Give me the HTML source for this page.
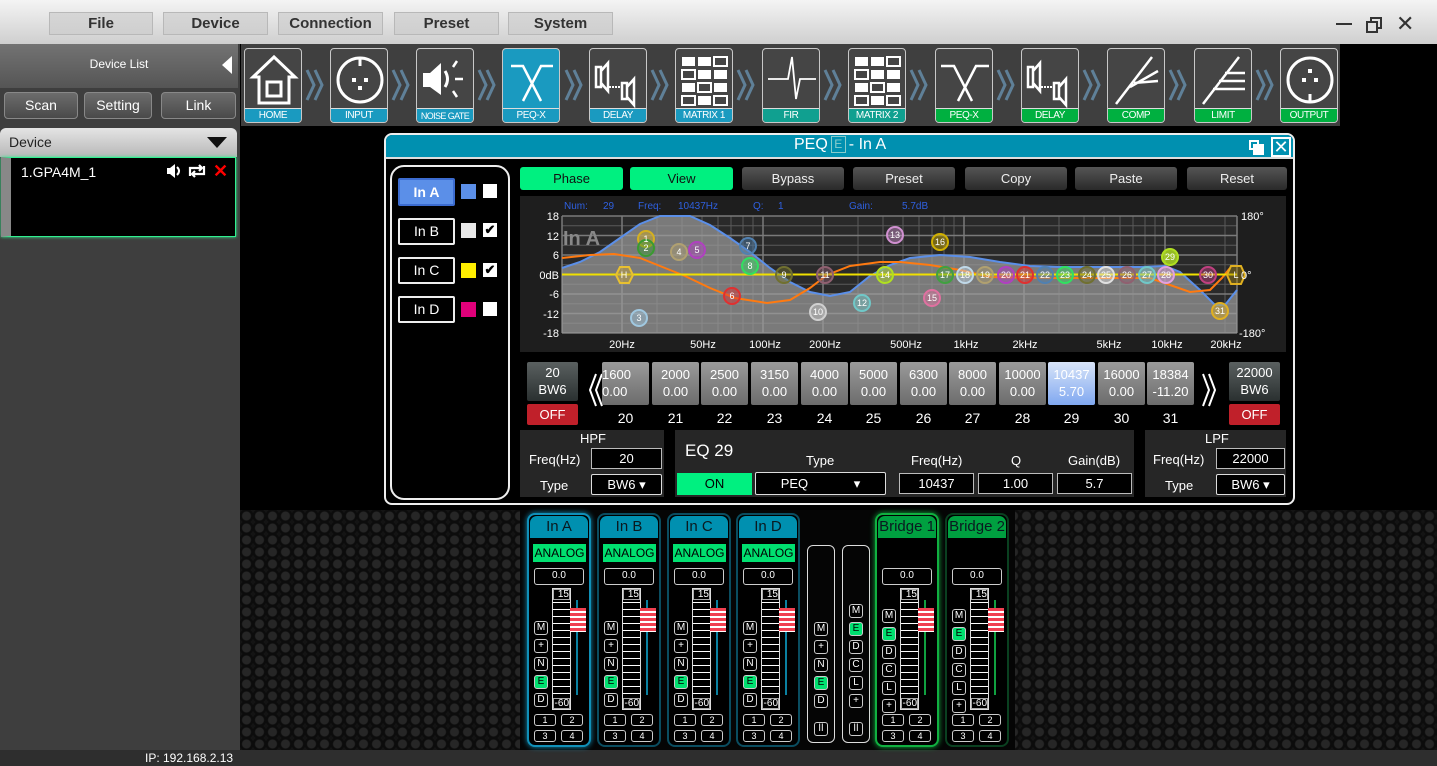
<!DOCTYPE html>
<html><head><meta charset="utf-8">
<style>
*{box-sizing:border-box;margin:0;padding:0}
body{width:1437px;height:766px;overflow:hidden;background:#000;font-family:"Liberation Sans Narrow","Liberation Sans",sans-serif;position:relative;color:#fff}
.a{position:absolute}
.menu{top:12px;height:23px;border:1px solid #b8b8b8;background:linear-gradient(#d6d6d6,#cfcfcf);color:#333;font-weight:bold;font-size:15px;text-align:center;line-height:21px}
.lbtn{top:92px;height:27px;border:1px solid #888;border-radius:4px;background:linear-gradient(#6c6c6c,#4a4a4a);font-size:14px;text-align:center;line-height:25px}
.tile{top:48px;width:58px;height:75px;border:1px solid #c8c8c8;border-radius:4px;background:#454545;overflow:hidden}
.tile svg{position:absolute;left:0;top:0}
.tile .lb{position:absolute;left:0;right:0;bottom:0;height:14px;font-size:10px;line-height:14px;text-align:center;color:#fff;border-top:1px solid #ddd;letter-spacing:-0.4px;white-space:nowrap}
.chev{top:68px}
.tb{top:167px;height:23px;border-radius:3px;font-size:13px;text-align:center;line-height:23px}
.g{background:#00f080;color:#111}
.d{background:linear-gradient(#555,#2a2a2a);color:#eee}
.band{top:362px;width:47px;height:43px;background:linear-gradient(#9a9a9a,#6c6c6c);border-radius:2px;font-size:13px;line-height:17px;text-align:center;padding-top:4px;color:#fff}
.bn{top:410px;width:47px;text-align:center;font-size:14px}
.inp{height:21px;border:1px solid #bbb;background:#000;font-size:13px;text-align:center;line-height:19px}
.pl{font-size:13px}
.strip{top:513px;width:64px;height:234px;border-radius:8px;background:#000;border:2px solid #0a4d60}
.hdr{position:absolute;left:1px;right:1px;top:1px;height:22px;border-radius:7px 7px 0 0;background:#0090b0;color:#0a1a20;font-size:15px;text-align:center;line-height:22px}
.an{position:absolute;left:4px;top:29px;width:53px;height:18px;background:#00e070;color:#000;font-size:12px;text-align:center;line-height:18px}
.val{position:absolute;left:5px;top:53px;width:50px;height:17px;border:1px solid #ccc;border-radius:3px;font-size:10px;text-align:center;line-height:14px}
.sc{position:absolute;left:23px;top:73px;width:19px;height:122px;border:1px solid #ddd;background:repeating-linear-gradient(#000 0 6px,#fff 6px 7px)}
.sc i{position:absolute;left:0;right:0;background:#000;font-style:normal;font-size:10px;text-align:right;line-height:10px;height:11px;border:1px solid #aaa}
.trk{position:absolute;left:47px;top:85px;width:2px;height:95px;background:#0a80a0}
.knob{position:absolute;left:41px;top:93px;width:16px;height:24px;background:repeating-linear-gradient(#f04050 0 3px,#fff 3px 5px)}
.sb{position:absolute;width:14px;height:14px;border:1px solid #ccc;border-radius:3px;font-size:10px;text-align:center;line-height:12px;background:#000}
.sb.e{background:#00e070;color:#000}
.nb{position:absolute;width:22px;height:12px;border:1px solid #ccc;border-radius:3px;font-size:9px;text-align:center;line-height:10px}
</style></head><body>

<!-- title bar -->
<div class="a" style="left:0;top:0;width:1437px;height:44px;background:linear-gradient(#f4f4f4,#cfcfcf)"></div>
<div class="a menu" style="left:49px;width:104px">File</div>
<div class="a menu" style="left:163px;width:105px">Device</div>
<div class="a menu" style="left:278px;width:105px">Connection</div>
<div class="a menu" style="left:394px;width:105px">Preset</div>
<div class="a menu" style="left:508px;width:105px">System</div>
<div class="a" style="left:1336px;top:23px;width:16px;height:2px;background:#333"></div>
<div class="a" style="left:1370px;top:17px;width:12px;height:12px;border:2px solid #333"></div>
<div class="a" style="left:1366px;top:21px;width:12px;height:12px;border:2px solid #333;background:#e0e0e0"></div>
<div class="a" style="left:1396px;top:11px;color:#333;font-size:22px;font-family:'Liberation Sans'">✕</div>

<!-- left panel -->
<div class="a" style="left:0;top:44px;width:240px;height:706px;background:#3e3e3e"></div>
<div class="a" style="left:0;top:44px;width:238px;height:44px;background:linear-gradient(#737373,#555);font-size:12px;text-align:center;line-height:40px">Device List</div>
<div class="a" style="left:222px;top:56px;width:0;height:0;border-top:9px solid transparent;border-bottom:9px solid transparent;border-right:10px solid #fff"></div>
<div class="a lbtn" style="left:4px;width:74px">Scan</div>
<div class="a lbtn" style="left:84px;width:68px">Setting</div>
<div class="a lbtn" style="left:161px;width:75px">Link</div>
<div class="a" style="left:0;top:128px;width:237px;height:29px;background:linear-gradient(#e4e4e4,#b8b8b8);border-radius:6px 6px 0 0;color:#222;font-size:14px;line-height:28px;padding-left:9px">Device</div>
<div class="a" style="left:207px;top:137px;width:0;height:0;border-left:10px solid transparent;border-right:10px solid transparent;border-top:11px solid #111"></div>
<div class="a" style="left:1px;top:157px;width:235px;height:80px;background:#000;border:1px solid #30f090;border-left:10px solid #888;box-shadow:0 0 3px #30f090"></div>
<div class="a" style="left:21px;top:164px;font-size:14px;font-family:'Liberation Sans'">1.GPA4M_1</div>
<svg class="a" style="left:166px;top:164px" width="16" height="14"><path d="M1 4 H4 L9 0 V14 L4 10 H1 Z" fill="#fff"/><path d="M11 3 Q15 7 11 11" stroke="#fff" stroke-width="2" fill="none"/></svg>
<svg class="a" style="left:187px;top:164px" width="20" height="14"><path d="M3 12 V4 H15 M12 1 L15 4 L12 7" stroke="#fff" stroke-width="2.2" fill="none"/><path d="M17 2 V10 H5 M8 13 L5 10 L8 7" stroke="#fff" stroke-width="2.2" fill="none"/></svg>
<div class="a" style="left:213px;top:161px;font-size:18px;color:#f00;font-weight:bold;font-family:'Liberation Sans'">✕</div>
<div class="a" style="left:0;top:750px;width:1437px;height:16px;background:#2e2e2e"></div>
<div class="a" style="left:145px;top:751px;font-size:12px;font-family:'Liberation Sans'">IP: 192.168.2.13</div>

<!-- toolbar -->
<div class="a" style="left:241px;top:44px;width:1099px;height:82px;background:#3f3f3f"></div>

<div class="a tile" style="left:244px"><svg width="58" height="60"><path d="M29 8 L8 28 H14 V54 H44 V28 H50 Z" fill="none" stroke="#fff" stroke-width="3"/><rect x="22" y="33" width="14" height="14" fill="none" stroke="#fff" stroke-width="3"/></svg><div class="lb" style="background:#1a9ac0">HOME</div></div>
<svg class="a chev" style="left:305px" width="22" height="34"><path d="M2 2 L9 17 L2 32 M10 2 L17 17 L10 32" fill="none" stroke="#5f8098" stroke-width="3"/></svg>
<div class="a tile" style="left:330px"><svg width="58" height="60"><circle cx="29" cy="31" r="22" fill="none" stroke="#fff" stroke-width="3"/><path d="M29 9 V17" stroke="#fff" stroke-width="3"/><rect x="21" y="29" width="4" height="4" fill="#fff"/><rect x="33" y="29" width="4" height="4" fill="#fff"/><rect x="27" y="37" width="4" height="4" fill="#fff"/></svg><div class="lb" style="background:#1a9ac0">INPUT</div></div>
<svg class="a chev" style="left:391px" width="22" height="34"><path d="M2 2 L9 17 L2 32 M10 2 L17 17 L10 32" fill="none" stroke="#5f8098" stroke-width="3"/></svg>
<div class="a tile" style="left:416px"><svg width="58" height="60"><path d="M6 24 H13 L24 14 V46 L13 38 H6 Z" fill="#fff"/><path d="M28 22 Q33 30 28 38" fill="none" stroke="#fff" stroke-width="3"/><path d="M36 18 L40 12 M38 30 H46 M36 42 L40 48" stroke="#fff" stroke-width="2.5"/></svg><div class="lb" style="background:#1a9ac0;font-size:9px;letter-spacing:-0.6px">NOISE GATE</div></div>
<svg class="a chev" style="left:477px" width="22" height="34"><path d="M2 2 L9 17 L2 32 M10 2 L17 17 L10 32" fill="none" stroke="#5f8098" stroke-width="3"/></svg>
<div class="a tile" style="left:502px;background:#1a9ac0"><svg width="58" height="60"><path d="M8 17 H20 L38 52 M50 17 H38 L20 52" fill="none" stroke="#fff" stroke-width="2.5"/></svg><div class="lb" style="background:#1a9ac0">PEQ-X</div></div>
<svg class="a chev" style="left:564px" width="22" height="34"><path d="M2 2 L9 17 L2 32 M10 2 L17 17 L10 32" fill="none" stroke="#5f8098" stroke-width="3"/></svg>
<div class="a tile" style="left:589px"><svg width="58" height="60"><path d="M6 18 H11 V38 H6 Z M11 22 L18 14 V42 L11 34" fill="none" stroke="#fff" stroke-width="2.5"/><path d="M19 38 H32" stroke="#fff" stroke-width="2" stroke-dasharray="2 1"/><path d="M32 34 H37 V50 H32 Z M37 38 L44 30 V56 L37 48" fill="none" stroke="#fff" stroke-width="2.5"/></svg><div class="lb" style="background:#1a9ac0">DELAY</div></div>
<svg class="a chev" style="left:650px" width="22" height="34"><path d="M2 2 L9 17 L2 32 M10 2 L17 17 L10 32" fill="none" stroke="#5f8098" stroke-width="3"/></svg>
<div class="a tile" style="left:675px"><svg width="58" height="60" fill="#fff"><rect x="6" y="8" width="13" height="9"/><rect x="22" y="8" width="13" height="9"/><rect x="38" y="8" width="13" height="9" fill="none" stroke="#fff" stroke-width="2"/><rect x="6" y="21" width="13" height="9" fill="none" stroke="#fff" stroke-width="2"/><rect x="22" y="21" width="13" height="9"/><rect x="38" y="21" width="13" height="9"/><rect x="6" y="34" width="13" height="9"/><rect x="22" y="34" width="13" height="9" fill="none" stroke="#fff" stroke-width="2"/><rect x="38" y="34" width="13" height="9"/><rect x="6" y="47" width="13" height="9" fill="none" stroke="#fff" stroke-width="2"/><rect x="22" y="47" width="13" height="9"/><rect x="38" y="47" width="13" height="9" fill="none" stroke="#fff" stroke-width="2"/></svg><div class="lb" style="background:#1a9ac0">MATRIX 1</div></div>
<svg class="a chev" style="left:736px" width="22" height="34"><path d="M2 2 L9 17 L2 32 M10 2 L17 17 L10 32" fill="none" stroke="#5f8098" stroke-width="3"/></svg>
<div class="a tile" style="left:762px"><svg width="58" height="60"><path d="M5 30 H20 L25 30 L29 8 L33 50 L37 30 H53" fill="none" stroke="#fff" stroke-width="1.8"/></svg><div class="lb" style="background:#10a090">FIR</div></div>
<svg class="a chev" style="left:823px" width="22" height="34"><path d="M2 2 L9 17 L2 32 M10 2 L17 17 L10 32" fill="none" stroke="#5f8098" stroke-width="3"/></svg>
<div class="a tile" style="left:848px"><svg width="58" height="60" fill="#fff"><rect x="6" y="8" width="13" height="9"/><rect x="22" y="8" width="13" height="9"/><rect x="38" y="8" width="13" height="9" fill="none" stroke="#fff" stroke-width="2"/><rect x="6" y="21" width="13" height="9" fill="none" stroke="#fff" stroke-width="2"/><rect x="22" y="21" width="13" height="9"/><rect x="38" y="21" width="13" height="9"/><rect x="6" y="34" width="13" height="9"/><rect x="22" y="34" width="13" height="9" fill="none" stroke="#fff" stroke-width="2"/><rect x="38" y="34" width="13" height="9"/><rect x="6" y="47" width="13" height="9" fill="none" stroke="#fff" stroke-width="2"/><rect x="22" y="47" width="13" height="9"/><rect x="38" y="47" width="13" height="9" fill="none" stroke="#fff" stroke-width="2"/></svg><div class="lb" style="background:#10a090">MATRIX 2</div></div>
<svg class="a chev" style="left:909px" width="22" height="34"><path d="M2 2 L9 17 L2 32 M10 2 L17 17 L10 32" fill="none" stroke="#5f8098" stroke-width="3"/></svg>
<div class="a tile" style="left:935px"><svg width="58" height="60"><path d="M5 17 H18 L36 52 M53 17 H40 L22 52" fill="none" stroke="#fff" stroke-width="2.5"/></svg><div class="lb" style="background:#00b040">PEQ-X</div></div>
<svg class="a chev" style="left:996px" width="22" height="34"><path d="M2 2 L9 17 L2 32 M10 2 L17 17 L10 32" fill="none" stroke="#5f8098" stroke-width="3"/></svg>
<div class="a tile" style="left:1021px"><svg width="58" height="60"><path d="M6 18 H11 V38 H6 Z M11 22 L18 14 V42 L11 34" fill="none" stroke="#fff" stroke-width="2.5"/><path d="M19 38 H32" stroke="#fff" stroke-width="2" stroke-dasharray="2 1"/><path d="M32 34 H37 V50 H32 Z M37 38 L44 30 V56 L37 48" fill="none" stroke="#fff" stroke-width="2.5"/></svg><div class="lb" style="background:#00b040">DELAY</div></div>
<svg class="a chev" style="left:1082px" width="22" height="34"><path d="M2 2 L9 17 L2 32 M10 2 L17 17 L10 32" fill="none" stroke="#5f8098" stroke-width="3"/></svg>
<div class="a tile" style="left:1107px"><svg width="58" height="60"><path d="M8 55 L44 8 M22 38 L50 22 M26 34 L50 32" fill="none" stroke="#fff" stroke-width="2.5"/></svg><div class="lb" style="background:#00b040">COMP</div></div>
<svg class="a chev" style="left:1168px" width="22" height="34"><path d="M2 2 L9 17 L2 32 M10 2 L17 17 L10 32" fill="none" stroke="#5f8098" stroke-width="3"/></svg>
<div class="a tile" style="left:1194px"><svg width="58" height="60"><path d="M8 55 L44 8 M30 24 H50 M24 32 H50 M18 40 H50" fill="none" stroke="#fff" stroke-width="2.5"/></svg><div class="lb" style="background:#00b040">LIMIT</div></div>
<svg class="a chev" style="left:1255px" width="22" height="34"><path d="M2 2 L9 17 L2 32 M10 2 L17 17 L10 32" fill="none" stroke="#5f8098" stroke-width="3"/></svg>
<div class="a tile" style="left:1280px"><svg width="58" height="60"><circle cx="29" cy="31" r="22" fill="none" stroke="#fff" stroke-width="3"/><path d="M29 45 V53" stroke="#fff" stroke-width="3"/><rect x="27" y="20" width="4" height="4" fill="#fff"/><rect x="21" y="29" width="4" height="4" fill="#fff"/><rect x="33" y="29" width="4" height="4" fill="#fff"/></svg><div class="lb" style="background:#00b040">OUTPUT</div></div>

<!-- PEQ window -->
<div class="a" style="left:384px;top:133px;width:911px;height:372px;border:2px solid #eee;border-radius:8px;background:#000;overflow:hidden">
 <div class="a" style="left:0;top:0;width:907px;height:24px;background:#0090b0;border-bottom:2px solid #ddd"></div>
</div>
<div class="a" style="left:794px;top:136px;font-size:16px;font-family:'Liberation Sans'">PEQ<span style="display:inline-block;border:1px solid #8cc;color:#8cc;font-size:12px;width:15px;height:17px;text-align:center;line-height:15px;margin:0 3px;vertical-align:1px">E</span>- In A</div>
<div class="a" style="left:1249px;top:140px;width:10px;height:10px;border:2px solid #fff"></div>
<div class="a" style="left:1253px;top:144px;width:11px;height:11px;background:#fff"></div>
<div class="a" style="left:1271px;top:137px;width:20px;height:20px;border:2px solid #fff;font-size:18px;line-height:16px;text-align:center;font-family:'Liberation Sans'">✕</div>

<div class="a" style="left:390px;top:165px;width:120px;height:335px;border:2px solid #eee;border-radius:14px"></div>
<div class="a" style="left:398px;top:178px;width:57px;height:28px;background:#5b8fe8;border:2px solid #3c6cd0;border-radius:2px;font-size:14px;font-weight:bold;text-align:center;line-height:24px;font-family:'Liberation Sans'">In A</div>
<div class="a" style="left:461px;top:184px;width:15px;height:15px;background:#5b8fe8"></div>
<div class="a" style="left:483px;top:184px;width:14px;height:14px;background:#fff"></div>
<div class="a" style="left:398px;top:218px;width:57px;height:27px;border:2px solid #eee;border-radius:2px;font-size:14px;text-align:center;line-height:23px;font-family:'Liberation Sans'">In B</div>
<div class="a" style="left:461px;top:223px;width:15px;height:15px;background:#e8e8e8"></div>
<div class="a" style="left:483px;top:223px;width:14px;height:14px;background:#fff;color:#000;font-size:13px;line-height:14px;text-align:center;font-weight:bold">✔</div>
<div class="a" style="left:398px;top:257px;width:57px;height:27px;border:2px solid #eee;border-radius:2px;font-size:14px;text-align:center;line-height:23px;font-family:'Liberation Sans'">In C</div>
<div class="a" style="left:461px;top:263px;width:15px;height:15px;background:#ffee00"></div>
<div class="a" style="left:483px;top:263px;width:14px;height:14px;background:#fff;color:#000;font-size:13px;line-height:14px;text-align:center;font-weight:bold">✔</div>
<div class="a" style="left:398px;top:296px;width:57px;height:27px;border:2px solid #eee;border-radius:2px;font-size:14px;text-align:center;line-height:23px;font-family:'Liberation Sans'">In D</div>
<div class="a" style="left:461px;top:302px;width:15px;height:15px;background:#e0007a"></div>
<div class="a" style="left:483px;top:302px;width:14px;height:14px;background:#fff"></div>

<div class="a tb g" style="left:520px;width:103px">Phase</div>
<div class="a tb g" style="left:630px;width:103px">View</div>
<div class="a tb d" style="left:742px;width:102px">Bypass</div>
<div class="a tb d" style="left:853px;width:102px">Preset</div>
<div class="a tb d" style="left:965px;width:102px">Copy</div>
<div class="a tb d" style="left:1075px;width:102px">Paste</div>
<div class="a tb d" style="left:1187px;width:100px">Reset</div>

<!-- graph -->
<svg class="a" style="left:520px;top:196px" width="766" height="156" viewBox="520 196 766 156" font-family="Liberation Sans, sans-serif">
<rect x="520" y="196" width="766" height="156" fill="#1e1e1e"/>
<rect x="562" y="216" width="675" height="117" fill="#2a2a2a"/>
<g stroke="#5a5a5a" stroke-width="1">
<path d="M562 225.8H1237M562 245.3H1237M562 264.8H1237M562 284.3H1237M562 303.8H1237M562 323.3H1237"/>
<path d="M657 216V333M682 216V333M702 216V333M718 216V333M731 216V333M743 216V333M753 216V333M858 216V333M883 216V333M903 216V333M919 216V333M932 216V333M944 216V333M954 216V333M1059 216V333M1084 216V333M1104 216V333M1120 216V333M1133 216V333M1145 216V333M1155 216V333M1225 216V333"/>
</g>
<g stroke="#7a7a7a" stroke-width="1.5"><path d="M562 216H1237M562 235.5H1237M562 255H1237M562 294H1237M562 313.5H1237M562 333H1237M622 216V333M763 216V333M823 216V333M964 216V333M1024 216V333M1165 216V333M562 216V333M1237 216V333"/></g>
<polygon fill="#9a9a9a" fill-opacity="0.72" points="562,333 562,268 580,262 600,252 620,238 640,224 660,216 690,216 710,225 730,238 750,252 770,268 790,282 810,292 830,296 850,292 870,276 890,265 910,258 940,255 970,257 1000,262 1030,266 1060,267 1100,267 1140,267 1165,266 1180,272 1200,290 1215,305 1225,305 1237,290 1237,333"/>
<text x="563" y="245" fill="#888" font-size="20" font-weight="bold">In A</text>
<polyline fill="none" stroke="#5b8fe8" stroke-width="2" points="562,268 580,262 600,252 620,238 640,224 660,216 690,216 710,225 730,238 750,252 770,268 790,282 810,292 830,296 850,292 870,276 890,265 910,258 940,255 970,257 1000,262 1030,266 1060,267 1100,267 1140,267 1165,266 1180,272 1200,290 1215,305 1225,305 1237,290"/>
<polyline fill="none" stroke="#ff7a10" stroke-width="2" points="562,258 590,255 614,254 640,258 660,266 685,276 710,288 735,298 767,303 790,300 810,288 827,275 850,266 880,262 900,262 930,265 960,270 990,277 1050,278 1150,278 1170,285 1190,292 1210,290 1222,278 1230,268"/>
<line x1="562" y1="274.5" x2="1237" y2="274.5" stroke="#f0e000" stroke-width="2"/>
<g font-size="10" text-anchor="middle" stroke-width="2" fill-opacity="0.45">
<g fill="#d4b020" stroke="#d4b020"><circle cx="646" cy="239" r="8"/></g>
<g fill="#3a9a30" stroke="#3a9a30"><circle cx="646" cy="248" r="8"/></g>
<g fill="#a0c8e0" stroke="#a0c8e0"><circle cx="639" cy="318" r="8"/></g>
<g fill="#b0a070" stroke="#b0a070"><circle cx="679" cy="252" r="8"/></g>
<g fill="#b040c0" stroke="#b040c0"><circle cx="697" cy="250" r="8"/></g>
<g fill="#e03030" stroke="#e03030"><circle cx="732" cy="296" r="8"/></g>
<g fill="#5080b0" stroke="#5080b0"><circle cx="748" cy="246" r="8"/></g>
<g fill="#30e060" stroke="#30e060"><circle cx="750" cy="266" r="8"/></g>
<g fill="#707030" stroke="#707030"><circle cx="784" cy="275" r="8"/></g>
<g fill="#d0d0d0" stroke="#d0d0d0"><circle cx="818" cy="312" r="8"/></g>
<g fill="#906070" stroke="#906070"><circle cx="825" cy="275" r="8"/></g>
<g fill="#70c8c8" stroke="#70c8c8"><circle cx="862" cy="303" r="8"/></g>
<g fill="#d090d0" stroke="#d090d0"><circle cx="895" cy="235" r="8"/></g>
<g fill="#b0e020" stroke="#b0e020"><circle cx="885" cy="275" r="8"/></g>
<g fill="#e070a0" stroke="#e070a0"><circle cx="932" cy="298" r="8"/></g>
<g fill="#d0b000" stroke="#d0b000"><circle cx="940" cy="242" r="8"/></g>
<g fill="#40a040" stroke="#40a040"><circle cx="945" cy="275" r="8"/></g>
<g fill="#c0d8e8" stroke="#c0d8e8"><circle cx="965" cy="275" r="8"/></g>
<g fill="#b0a070" stroke="#b0a070"><circle cx="985" cy="275" r="8"/></g>
<g fill="#b040c0" stroke="#b040c0"><circle cx="1006" cy="275" r="8"/></g>
<g fill="#e03030" stroke="#e03030"><circle cx="1025" cy="275" r="8"/></g>
<g fill="#5080b0" stroke="#5080b0"><circle cx="1045" cy="275" r="8"/></g>
<g fill="#30e060" stroke="#30e060"><circle cx="1065" cy="275" r="8"/></g>
<g fill="#707030" stroke="#707030"><circle cx="1087" cy="275" r="8"/></g>
<g fill="#e0e0e0" stroke="#e0e0e0"><circle cx="1106" cy="275" r="8"/></g>
<g fill="#906070" stroke="#906070"><circle cx="1127" cy="275" r="8"/></g>
<g fill="#70c8c8" stroke="#70c8c8"><circle cx="1147" cy="275" r="8"/></g>
<g fill="#e0a0e0" stroke="#e0a0e0"><circle cx="1166" cy="275" r="8"/></g>
<g fill="#b0e020" stroke="#b0e020" fill-opacity="0.8"><circle cx="1170" cy="257" r="8"/></g>
<g fill="#c04080" stroke="#c04080"><circle cx="1208" cy="275" r="8"/></g>
<g fill="#e0b020" stroke="#e0b020"><circle cx="1220" cy="311" r="8"/></g>
<polygon points="616,275 620,267 629,267 633,275 629,283 620,283" fill="#c0a040" fill-opacity="0.5" stroke="#e8c030" stroke-width="2"/>
<polygon points="1227,275 1231,266 1241,266 1245,275 1241,284 1231,284" fill="#a08010" stroke="#e0b020" stroke-width="2"/>
</g>
<g font-size="9" text-anchor="middle" fill="#fff">
<text x="646" y="242">1</text><text x="646" y="251">2</text><text x="639" y="321">3</text><text x="679" y="255">4</text><text x="697" y="253">5</text><text x="732" y="299">6</text><text x="748" y="249">7</text><text x="750" y="269">8</text><text x="784" y="278">9</text><text x="818" y="315">10</text><text x="825" y="278">11</text><text x="862" y="306">12</text><text x="895" y="238">13</text><text x="885" y="278">14</text><text x="932" y="301">15</text><text x="940" y="245">16</text><text x="945" y="278">17</text><text x="965" y="278">18</text><text x="985" y="278">19</text><text x="1006" y="278">20</text><text x="1025" y="278">21</text><text x="1045" y="278">22</text><text x="1065" y="278">23</text><text x="1087" y="278">24</text><text x="1106" y="278">25</text><text x="1127" y="278">26</text><text x="1147" y="278">27</text><text x="1166" y="278">28</text><text x="1170" y="260">29</text><text x="1208" y="278">30</text><text x="1220" y="314">31</text><text x="624" y="278">H</text><text x="1236" y="278">L</text>
</g>
<g font-size="11" fill="#fff" text-anchor="end">
<text x="559" y="220">18</text><text x="559" y="240">12</text><text x="559" y="259">6</text><text x="559" y="279">0dB</text><text x="559" y="298">-6</text><text x="559" y="318">-12</text><text x="559" y="337">-18</text>
</g>
<g font-size="11" fill="#fff"><text x="1241" y="220">180°</text><text x="1241" y="279">0°</text><text x="1239" y="337">-180°</text></g>
<g font-size="11" fill="#fff" text-anchor="middle"><text x="622" y="348">20Hz</text><text x="703" y="348">50Hz</text><text x="765" y="348">100Hz</text><text x="825" y="348">200Hz</text><text x="906" y="348">500Hz</text><text x="966" y="348">1kHz</text><text x="1025" y="348">2kHz</text><text x="1109" y="348">5kHz</text><text x="1167" y="348">10kHz</text><text x="1226" y="348">20kHz</text></g>
<g font-size="10" fill="#2f60e0"><text x="564" y="209">Num:</text><text x="603" y="209">29</text><text x="638" y="209">Freq:</text><text x="678" y="209">10437Hz</text><text x="753" y="209">Q:</text><text x="778" y="209">1</text><text x="849" y="209">Gain:</text><text x="902" y="209">5.7dB</text></g>
</svg>

<!-- bands -->
<div class="a" style="left:527px;top:362px;width:51px;height:39px;background:linear-gradient(#5a6060,#2a3030);border-radius:2px;font-size:13px;text-align:center;line-height:17px;padding-top:2px">20<br>BW6</div>
<div class="a" style="left:527px;top:404px;width:51px;height:21px;background:#c0202a;border-radius:2px;font-size:13px;text-align:center;line-height:21px">OFF</div>
<svg class="a" style="left:588px;top:372px" width="16" height="36"><path d="M8 2 L2 18 L8 34 M14 2 L8 18 L14 34" fill="none" stroke="#fff" stroke-width="2"/></svg>
<div class="a band" style="left:602px;text-align:left">1600<br>0.00</div>
<div class="a band" style="left:652px">2000<br>0.00</div>
<div class="a band" style="left:701px">2500<br>0.00</div>
<div class="a band" style="left:751px">3150<br>0.00</div>
<div class="a band" style="left:801px">4000<br>0.00</div>
<div class="a band" style="left:850px">5000<br>0.00</div>
<div class="a band" style="left:900px">6300<br>0.00</div>
<div class="a band" style="left:949px">8000<br>0.00</div>
<div class="a band" style="left:999px">10000<br>0.00</div>
<div class="a band" style="left:1048px;background:linear-gradient(#d8e4f8,#80a8f0)">10437<br>5.70</div>
<div class="a band" style="left:1098px">16000<br>0.00</div>
<div class="a band" style="left:1147px">18384<br>-11.20</div>
<div class="a bn" style="left:602px">20</div><div class="a bn" style="left:652px">21</div><div class="a bn" style="left:701px">22</div><div class="a bn" style="left:751px">23</div><div class="a bn" style="left:801px">24</div><div class="a bn" style="left:850px">25</div><div class="a bn" style="left:900px">26</div><div class="a bn" style="left:949px">27</div><div class="a bn" style="left:999px">28</div><div class="a bn" style="left:1048px">29</div><div class="a bn" style="left:1098px">30</div><div class="a bn" style="left:1147px">31</div>
<svg class="a" style="left:1201px;top:372px" width="16" height="36"><path d="M2 2 L8 18 L2 34 M8 2 L14 18 L8 34" fill="none" stroke="#fff" stroke-width="2"/></svg>
<div class="a" style="left:1229px;top:362px;width:51px;height:39px;background:linear-gradient(#5a6060,#2a3030);border-radius:2px;font-size:13px;text-align:center;line-height:17px;padding-top:2px">22000<br>BW6</div>
<div class="a" style="left:1229px;top:404px;width:51px;height:21px;background:#c0202a;border-radius:2px;font-size:13px;text-align:center;line-height:21px">OFF</div>

<!-- bottom param panels -->
<div class="a" style="left:520px;top:430px;width:144px;height:67px;background:#262626"></div>
<div class="a pl" style="left:580px;top:431px">HPF</div>
<div class="a pl" style="left:529px;top:452px">Freq(Hz)</div>
<div class="a inp" style="left:591px;top:448px;width:71px">20</div>
<div class="a pl" style="left:540px;top:478px">Type</div>
<div class="a inp" style="left:591px;top:474px;width:71px;border-color:#ddd;border-radius:2px">BW6 ▾</div>
<div class="a" style="left:675px;top:430px;width:459px;height:67px;background:#262626"></div>
<div class="a" style="left:685px;top:441px;font-size:17px">EQ 29</div>
<div class="a" style="left:677px;top:473px;width:75px;height:22px;background:#00f080;color:#000;font-size:13px;text-align:center;line-height:22px">ON</div>
<div class="a pl" style="left:806px;top:453px">Type</div>
<div class="a inp" style="left:755px;top:472px;width:131px;height:23px;border-color:#ddd;border-radius:2px;line-height:21px">PEQ <span style="margin-left:42px">▾</span></div>
<div class="a pl" style="left:911px;top:453px">Freq(Hz)</div>
<div class="a inp" style="left:899px;top:473px;width:75px">10437</div>
<div class="a pl" style="left:1011px;top:453px">Q</div>
<div class="a inp" style="left:978px;top:473px;width:75px">1.00</div>
<div class="a pl" style="left:1068px;top:453px">Gain(dB)</div>
<div class="a inp" style="left:1057px;top:473px;width:75px">5.7</div>
<div class="a" style="left:1145px;top:430px;width:141px;height:67px;background:#262626"></div>
<div class="a pl" style="left:1205px;top:431px">LPF</div>
<div class="a pl" style="left:1153px;top:452px">Freq(Hz)</div>
<div class="a inp" style="left:1216px;top:448px;width:69px">22000</div>
<div class="a pl" style="left:1165px;top:478px">Type</div>
<div class="a inp" style="left:1216px;top:474px;width:69px;border-color:#ddd;border-radius:2px">BW6 ▾</div>

<!-- mixer area -->
<div class="a" style="left:240px;top:510px;width:1197px;height:240px;background-color:#141414;background-image:radial-gradient(circle,#262626 0 4px,#0c0c0c 5px 7px,transparent 7px);background-size:13px 12px"></div>
<div class="a" style="left:520px;top:510px;width:495px;height:240px;background:#050505"></div>

<!-- In A -->
<div class="a strip" style="left:527px;border-color:#1090b8;box-shadow:0 0 6px #1090b8">
<div class="hdr">In A</div><div class="an">ANALOG</div><div class="val">0.0</div>
<div class="sc"><i style="top:0">15</i><i style="bottom:0">-60</i></div><div class="trk"></div><div class="knob"></div>
<div class="sb" style="left:5px;top:106px">M</div><div class="sb" style="left:5px;top:124px">+</div><div class="sb" style="left:5px;top:142px">N</div><div class="sb e" style="left:5px;top:160px">E</div><div class="sb" style="left:5px;top:178px">D</div>
<div class="nb" style="left:5px;top:199px">1</div><div class="nb" style="left:32px;top:199px">2</div><div class="nb" style="left:5px;top:215px">3</div><div class="nb" style="left:32px;top:215px">4</div>
</div>
<div class="a strip" style="left:597px">
<div class="hdr">In B</div><div class="an">ANALOG</div><div class="val">0.0</div>
<div class="sc"><i style="top:0">15</i><i style="bottom:0">-60</i></div><div class="trk"></div><div class="knob"></div>
<div class="sb" style="left:5px;top:106px">M</div><div class="sb" style="left:5px;top:124px">+</div><div class="sb" style="left:5px;top:142px">N</div><div class="sb e" style="left:5px;top:160px">E</div><div class="sb" style="left:5px;top:178px">D</div>
<div class="nb" style="left:5px;top:199px">1</div><div class="nb" style="left:32px;top:199px">2</div><div class="nb" style="left:5px;top:215px">3</div><div class="nb" style="left:32px;top:215px">4</div>
</div>
<div class="a strip" style="left:667px">
<div class="hdr">In C</div><div class="an">ANALOG</div><div class="val">0.0</div>
<div class="sc"><i style="top:0">15</i><i style="bottom:0">-60</i></div><div class="trk"></div><div class="knob"></div>
<div class="sb" style="left:5px;top:106px">M</div><div class="sb" style="left:5px;top:124px">+</div><div class="sb" style="left:5px;top:142px">N</div><div class="sb e" style="left:5px;top:160px">E</div><div class="sb" style="left:5px;top:178px">D</div>
<div class="nb" style="left:5px;top:199px">1</div><div class="nb" style="left:32px;top:199px">2</div><div class="nb" style="left:5px;top:215px">3</div><div class="nb" style="left:32px;top:215px">4</div>
</div>
<div class="a strip" style="left:736px">
<div class="hdr">In D</div><div class="an">ANALOG</div><div class="val">0.0</div>
<div class="sc"><i style="top:0">15</i><i style="bottom:0">-60</i></div><div class="trk"></div><div class="knob"></div>
<div class="sb" style="left:5px;top:106px">M</div><div class="sb" style="left:5px;top:124px">+</div><div class="sb" style="left:5px;top:142px">N</div><div class="sb e" style="left:5px;top:160px">E</div><div class="sb" style="left:5px;top:178px">D</div>
<div class="nb" style="left:5px;top:199px">1</div><div class="nb" style="left:32px;top:199px">2</div><div class="nb" style="left:5px;top:215px">3</div><div class="nb" style="left:32px;top:215px">4</div>
</div>

<!-- narrow strips -->
<div class="a" style="left:807px;top:545px;width:28px;height:198px;border:1px solid #ddd;border-radius:6px">
<div class="sb" style="left:6px;top:76px">M</div><div class="sb" style="left:6px;top:94px">+</div><div class="sb" style="left:6px;top:112px">N</div><div class="sb e" style="left:6px;top:130px">E</div><div class="sb" style="left:6px;top:148px">D</div><div class="sb" style="left:6px;top:176px">ǀǀ</div>
</div>
<div class="a" style="left:842px;top:545px;width:28px;height:198px;border:1px solid #ddd;border-radius:6px">
<div class="sb" style="left:6px;top:58px">M</div><div class="sb e" style="left:6px;top:76px">E</div><div class="sb" style="left:6px;top:94px">D</div><div class="sb" style="left:6px;top:112px">C</div><div class="sb" style="left:6px;top:130px">L</div><div class="sb" style="left:6px;top:148px">+</div><div class="sb" style="left:6px;top:176px">ǀǀ</div>
</div>

<!-- bridges -->
<div class="a strip" style="left:875px;border-color:#10b040;box-shadow:0 0 6px #10b040">
<div class="hdr" style="background:#00a040">Bridge 1</div><div class="val">0.0</div>
<div class="sc"><i style="top:0">15</i><i style="bottom:0">-60</i></div><div class="trk" style="background:#10a040"></div><div class="knob"></div>
<div class="sb" style="left:5px;top:94px">M</div><div class="sb e" style="left:5px;top:112px">E</div><div class="sb" style="left:5px;top:130px">D</div><div class="sb" style="left:5px;top:148px">C</div><div class="sb" style="left:5px;top:166px">L</div><div class="sb" style="left:5px;top:184px">+</div>
<div class="nb" style="left:5px;top:199px">1</div><div class="nb" style="left:32px;top:199px">2</div><div class="nb" style="left:5px;top:215px">3</div><div class="nb" style="left:32px;top:215px">4</div>
</div>
<div class="a strip" style="left:945px;border-color:#0a4020">
<div class="hdr" style="background:#00a040">Bridge 2</div><div class="val">0.0</div>
<div class="sc"><i style="top:0">15</i><i style="bottom:0">-60</i></div><div class="trk" style="background:#10a040"></div><div class="knob"></div>
<div class="sb" style="left:5px;top:94px">M</div><div class="sb e" style="left:5px;top:112px">E</div><div class="sb" style="left:5px;top:130px">D</div><div class="sb" style="left:5px;top:148px">C</div><div class="sb" style="left:5px;top:166px">L</div><div class="sb" style="left:5px;top:184px">+</div>
<div class="nb" style="left:5px;top:199px">1</div><div class="nb" style="left:32px;top:199px">2</div><div class="nb" style="left:5px;top:215px">3</div><div class="nb" style="left:32px;top:215px">4</div>
</div>

</body></html>
